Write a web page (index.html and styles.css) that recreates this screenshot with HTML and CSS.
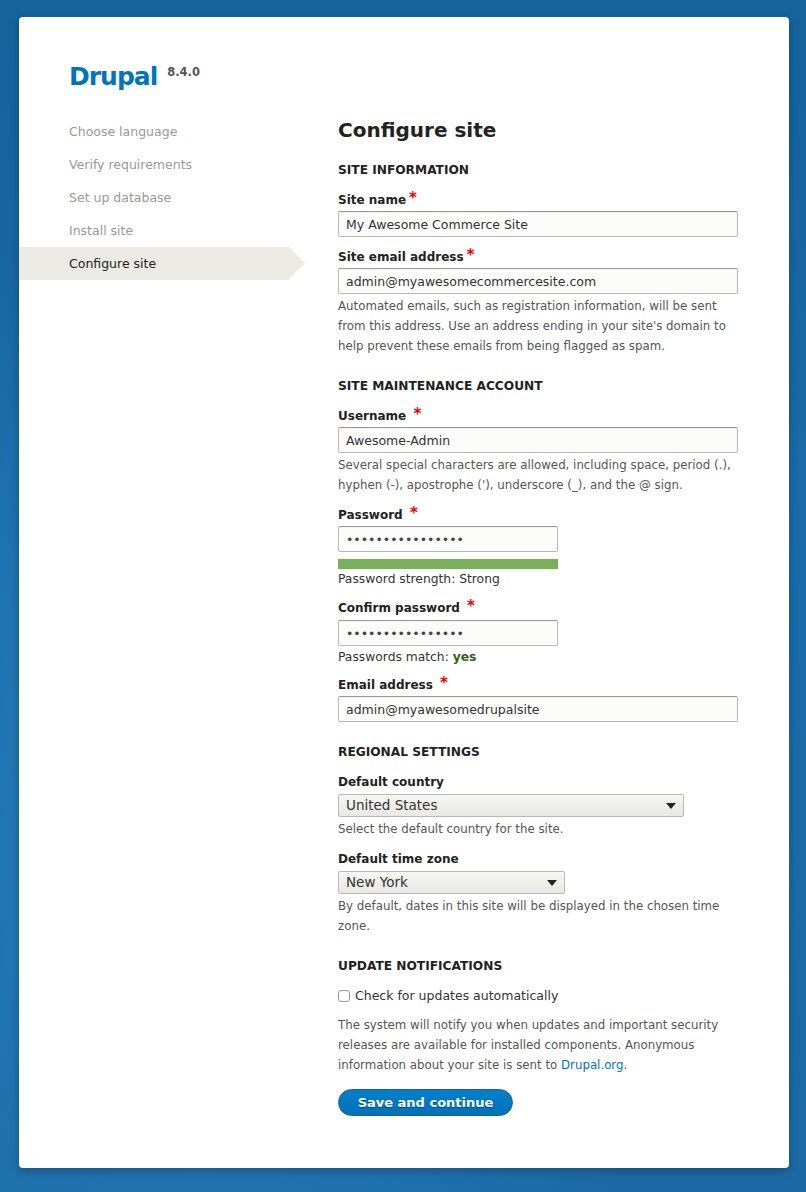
FILE: index.html
```html
<!DOCTYPE html>
<html lang="en">
<head>
<meta charset="utf-8">
<title>Configure site | Drupal</title>
<link rel="stylesheet" href="styles.css">
</head>
<body>
<div class="page">
  <div class="card">
    <header class="site-header">
      <h1 class="site-name">Drupal</h1><span class="version">8.4.0</span>
    </header>
    <div class="layout">
      <nav class="steps">
        <ol>
          <li class="done">Choose language</li>
          <li class="done">Verify requirements</li>
          <li class="done">Set up database</li>
          <li class="done">Install site</li>
          <li class="active">Configure site</li>
        </ol>
      </nav>
      <main class="content">
        <h2 class="title">Configure site</h2>

        <section class="group">
          <h3 class="legend">Site information</h3>
          <div class="item">
            <label class="label">Site name<span class="req">*</span></label>
            <input class="text full" type="text" value="My Awesome Commerce Site">
          </div>
          <div class="item">
            <label class="label">Site email address<span class="req">*</span></label>
            <input class="text full" type="text" value="admin@myawesomecommercesite.com">
            <div class="desc">Automated emails, such as registration information, will be sent from this address. Use an address ending in your site's domain to help prevent these emails from being flagged as spam.</div>
          </div>
        </section>

        <section class="group">
          <h3 class="legend">Site maintenance account</h3>
          <div class="item">
            <label class="label">Username <span class="req">*</span></label>
            <input class="text full" type="text" value="Awesome-Admin">
            <div class="desc">Several special characters are allowed, including space, period (.), hyphen (-), apostrophe ('), underscore (_), and the @ sign.</div>
          </div>
          <div class="item pw">
            <label class="label">Password <span class="req">*</span></label>
            <input class="text short" type="password" value="abcdefghijklmnop">
            <div class="strength"><div class="strength-fill" style="width:100%"></div></div>
            <div class="info">Password strength: Strong</div>
          </div>
          <div class="item pw2">
            <label class="label loose">Confirm password <span class="req">*</span></label>
            <input class="text short" type="password" value="abcdefghijklmnop">
            <div class="info match">Passwords match: <span class="ok">yes</span></div>
          </div>
          <div class="item">
            <label class="label">Email address <span class="req">*</span></label>
            <input class="text full" type="text" value="admin@myawesomedrupalsite">
          </div>
        </section>

        <section class="group">
          <h3 class="legend">Regional settings</h3>
          <div class="item">
            <label class="label loose">Default country</label>
            <div class="select country"><span>United States</span><i class="arrow"></i></div>
            <div class="desc">Select the default country for the site.</div>
          </div>
          <div class="item">
            <label class="label loose">Default time zone</label>
            <div class="select tz"><span>New York</span><i class="arrow"></i></div>
            <div class="desc">By default, dates in this site will be displayed in the chosen time zone.</div>
          </div>
        </section>

        <section class="group">
          <h3 class="legend">Update notifications</h3>
          <label class="check"><span class="box"></span>Check for updates automatically</label>
          <p class="desc notice">The system will notify you when updates and important security releases are available for installed components. Anonymous information about your site is sent to <a href="#">Drupal.org</a>.</p>
        </section>

        <button class="btn" type="button">Save and continue</button>
      </main>
    </div>
  </div>
</div>
</body>
</html>
```

FILE: styles.css
```css
html, body {
  margin: 0;
  padding: 0;
}
body {
  width: 806px;
  height: 1192px;
  overflow: hidden;
  font-family: "DejaVu Sans", "Lucida Grande", sans-serif;
  font-size: 13px;
  color: #333;
  background-color: #1a6ba8;
  background-image:
    radial-gradient(ellipse 700px 900px at 25% 72%, rgba(48,140,205,0.55), rgba(48,140,205,0) 70%),
    linear-gradient(180deg, #15629d 0%, #1a6ca9 50%, #1a69a4 100%);
}
.page {
  padding: 17px 17px 0 19px;
}
.card {
  width: 770px;
  height: 1151px;
  box-sizing: border-box;
  background: #fff;
  border-radius: 4px;
  box-shadow: 0 3px 8px rgba(0,0,0,0.25);
}
.site-header {
  display: flex;
  align-items: flex-start;
  padding: 44px 0 0 50px;
  height: 72px;
  box-sizing: border-box;
  margin-bottom: 26px;
}
.site-name {
  margin: 0;
  font-size: 25px;
  line-height: 32px;
  font-weight: bold;
  letter-spacing: -1px;
  color: #0074bd;
}
.version {
  font-size: 11.5px;
  font-weight: bold;
  color: #555;
  margin: 3px 0 0 10px;
  line-height: 16px;
}
.layout {
  display: flex;
}
.steps {
  width: 270px;
  flex: none;
}
.steps ol {
  list-style: none;
  margin: 0;
  padding: 0;
}
.steps li {
  position: relative;
  height: 33px;
  line-height: 33px;
  padding-left: 50px;
  font-size: 12.5px;
  color: #999;
}
.steps li.active {
  background: #ebeae4;
  color: #222;
}
.steps li.active::after {
  content: "";
  position: absolute;
  right: -16px;
  top: 0;
  border-top: 16.5px solid transparent;
  border-bottom: 16.5px solid transparent;
  border-left: 16px solid #ebeae4;
}
.content {
  margin-left: 49px;
  width: 400px;
}
.title {
  margin: 2px 0 17px;
  font-size: 20px;
  line-height: 26px;
  height: 26px;
  font-weight: bold;
  color: #222;
}
.group {
  margin: 0 0 20px;
}
.legend {
  margin: 0 0 10px;
  height: 20px;
  font-size: 12.2px;
  line-height: 21px;
  font-weight: bold;
  text-transform: uppercase;
  color: #222;
}
.item {
  margin-bottom: 10px;
}
.item.pw {
  margin-bottom: 9px;
}
.item.pw2 {
  margin-bottom: 8px;
}
.label {
  display: block;
  height: 20px;
  font-size: 12px;
  font-weight: bold;
  line-height: 21px;
  color: #222;
  margin-bottom: 1px;
}
.label.loose {
  margin-bottom: 2px;
}
.req {
  color: #e00;
  font-size: 15px;
  line-height: 0;
  margin-left: 3px;
  vertical-align: 1px;
}
.text {
  display: block;
  box-sizing: border-box;
  height: 26px;
  margin: 0;
  border: 1px solid #b8b8b8;
  border-top-color: #999;
  background: #fcfcfa;
  border-radius: 2px;
  padding: 0 7px;
  font-family: inherit;
  font-size: 12.5px;
  color: #333;
  box-shadow: inset 0 1px 1px rgba(0,0,0,0.05);
}
.text.full { width: 400px; }
.text.short { width: 220px; color: #444; }
.desc {
  font-size: 11.8px;
  line-height: 20px;
  color: #555;
  margin: 2px 0 0;
}
.strength {
  margin-top: 7px;
  width: 220px;
  height: 10px;
  background: #ebeae4;
}
.strength-fill {
  height: 100%;
  background: #77b259;
}
.info {
  height: 20px;
  font-size: 12.3px;
  line-height: 20px;
  color: #333;
}
.info.match {
  margin-top: 1px;
}
.ok {
  color: #325e1c;
  font-weight: bold;
}
.select {
  position: relative;
  box-sizing: border-box;
  height: 23px;
  border: 1px solid #b8b8b8;
  border-radius: 2px;
  background: linear-gradient(#f6f6f3, #e8e8e4);
  padding: 0 7px;
  font-size: 13.5px;
  line-height: 20px;
  color: #333;
}
.select.country { width: 346px; }
.select.tz { width: 227px; }
.arrow {
  position: absolute;
  right: 7px;
  top: 8px;
  border-left: 5px solid transparent;
  border-right: 5px solid transparent;
  border-top: 6px solid #222;
}
.check {
  display: flex;
  align-items: center;
  height: 20px;
  font-size: 12.5px;
  line-height: 20px;
  color: #333;
  margin-bottom: 9px;
}
.box {
  width: 10px;
  height: 10px;
  border: 1px solid #999;
  border-radius: 3px;
  background: #fff;
  margin-right: 5px;
}
.notice {
  margin-bottom: 0;
}
.notice a {
  color: #0074bd;
  text-decoration: none;
}
.btn {
  display: block;
  width: 175px;
  height: 27px;
  border: 1px solid #1e5c90;
  border-radius: 20px;
  background: linear-gradient(#0080cc, #0071b8);
  color: #fff;
  font-family: inherit;
  font-size: 13px;
  font-weight: bold;
  padding: 0;
  margin-top: -6px;
  text-shadow: 0 1px 0 rgba(0,0,0,0.4);
}
```
